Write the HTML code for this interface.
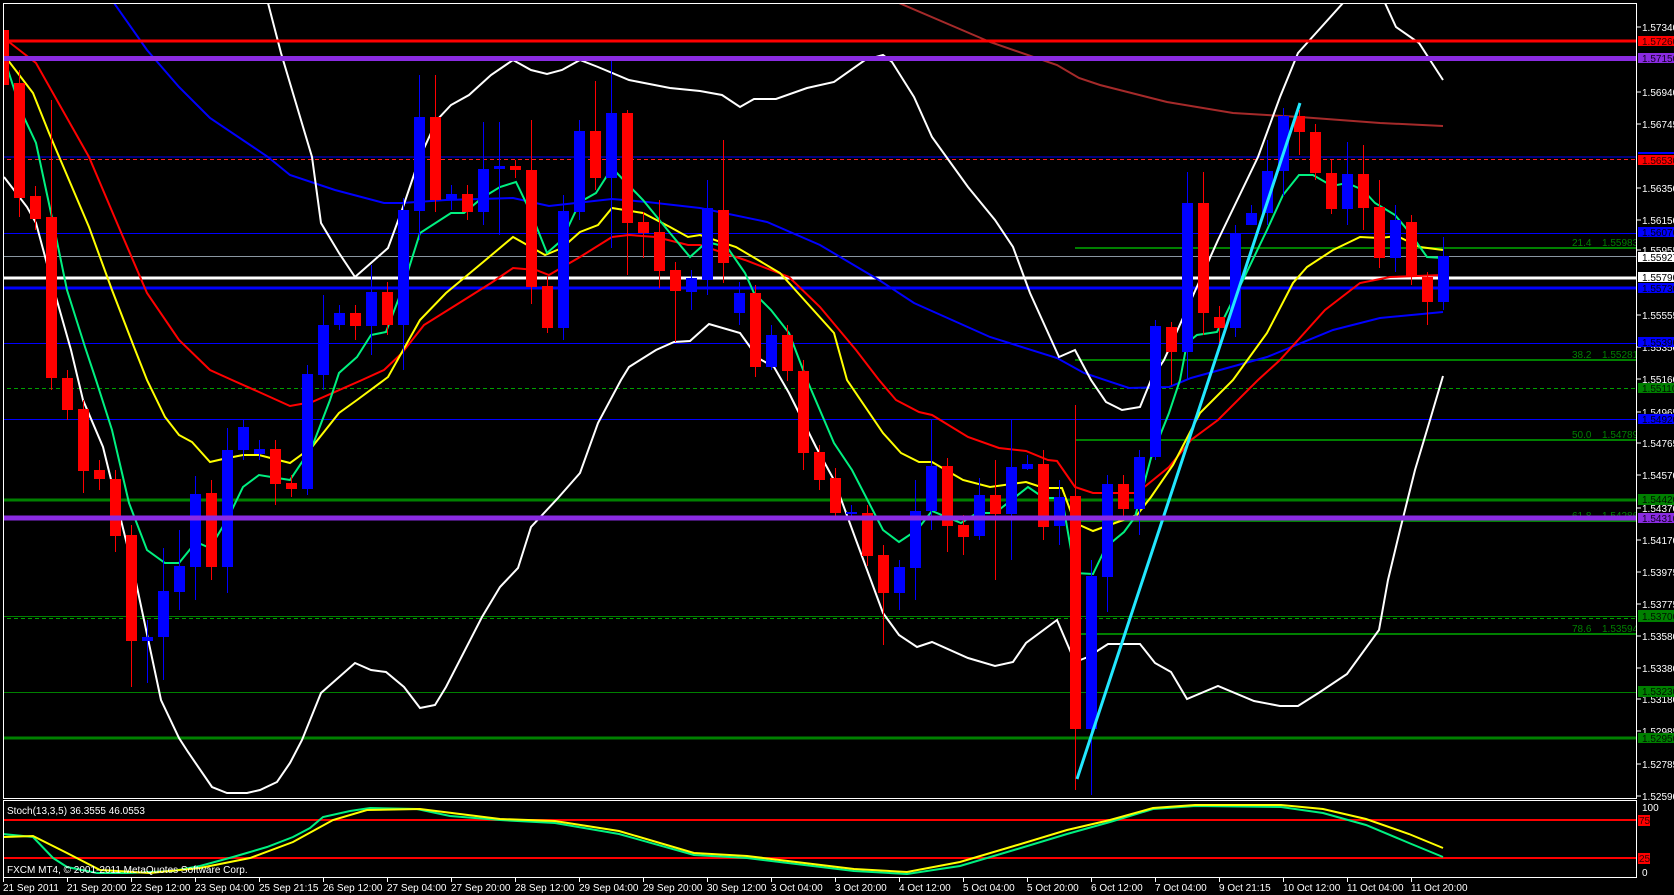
<!DOCTYPE html>
<html><head><meta charset="utf-8"><style>
html,body{margin:0;padding:0;background:#000;width:1674px;height:895px;overflow:hidden}
svg{display:block}
text{font-family:"Liberation Sans",sans-serif;font-size:10px}
</style></head><body>
<svg width="1674" height="895" viewBox="0 0 1674 895" xmlns="http://www.w3.org/2000/svg">
<rect width="1674" height="895" fill="#000"/>
<defs><clipPath id="m"><rect x="4" y="4" width="1633" height="794"/></clipPath>
<clipPath id="s"><rect x="4" y="801" width="1633" height="77"/></clipPath></defs>

<g clip-path="url(#m)">
<!-- horizontal levels -->
<line x1="0" x2="1637" y1="157" y2="157" stroke="#0000ff" stroke-width="1"/>
<line x1="0" x2="1637" y1="159.5" y2="159.5" stroke="#ff2020" stroke-width="1" stroke-dasharray="4,3"/>
<line x1="0" x2="1637" y1="233.5" y2="233.5" stroke="#0000ff" stroke-width="1"/>
<line x1="1075" x2="1637" y1="248" y2="248" stroke="#008000" stroke-width="2"/>
<line x1="0" x2="1637" y1="256.5" y2="256.5" stroke="#8a96a0" stroke-width="1"/>
<line x1="0" x2="1637" y1="343.5" y2="343.5" stroke="#0000ff" stroke-width="1"/>
<line x1="1075" x2="1637" y1="360" y2="360" stroke="#008000" stroke-width="2"/>
<line x1="0" x2="1637" y1="388.5" y2="388.5" stroke="#00a000" stroke-width="1" stroke-dasharray="4,3"/>
<line x1="0" x2="1637" y1="419.5" y2="419.5" stroke="#0000ff" stroke-width="1"/>
<line x1="1075" x2="1637" y1="440" y2="440" stroke="#008000" stroke-width="2"/>
<line x1="1075" x2="1637" y1="521" y2="521" stroke="#008000" stroke-width="2"/>
<line x1="0" x2="1637" y1="616.5" y2="616.5" stroke="#008000" stroke-width="1"/>
<line x1="0" x2="1637" y1="618.5" y2="618.5" stroke="#00a000" stroke-width="1" stroke-dasharray="4,3"/>
<line x1="1075" x2="1637" y1="634" y2="634" stroke="#008000" stroke-width="2"/>
<line x1="0" x2="1637" y1="692.5" y2="692.5" stroke="#008000" stroke-width="1"/>
<line x1="0" x2="1637" y1="738" y2="738" stroke="#008000" stroke-width="3"/>
<line x1="0" x2="1637" y1="500" y2="500" stroke="#008000" stroke-width="3"/>
<line x1="0" x2="1637" y1="278" y2="278" stroke="#ffffff" stroke-width="3"/>
<line x1="0" x2="1637" y1="288" y2="288" stroke="#0000ff" stroke-width="3"/>

<!-- fib texts -->
<g fill="#008000">
<text x="1572" y="246">21.4</text><text x="1602" y="246">1.55983</text>
<text x="1572" y="358">38.2</text><text x="1602" y="358">1.55281</text>
<text x="1572" y="438">50.0</text><text x="1602" y="438">1.54789</text>
<text x="1572" y="519">61.8</text><text x="1602" y="519">1.54286</text>
<text x="1572" y="632">78.6</text><text x="1602" y="632">1.53594</text>
</g>

<!-- brown MA -->
<polyline fill="none" stroke="#a52a2a" stroke-width="2" points="899,3 990,42 1057,65 1079,78 1100,85 1167,102 1233,113 1300,117 1380,123 1443,126"/>
<!-- long blue MA -->
<polyline fill="none" stroke="#0000ff" stroke-width="2" points="114,3 147,50 179,87 210,118 268,157 290,175 335,190 384,203 402,203 446,200 513,198 549,206 612,199 647,202 700,208 767,222 820,245 879,280 914,303 990,337 1057,358 1084,373 1129,388 1169,387 1191,378 1267,357 1333,330 1380,318 1443,312"/>
<!-- bollinger -->
<polyline fill="none" stroke="#fff" stroke-width="2" points="4,177 27,207 36,223 54,290 71,350 83,400 103,447 134,573 161,700 179,738 188,752 212,787 227,793 247,793 260,790 277,782 290,763 302,740 321,693 355,663 371,670 386,672 404,687 420,708 435,705 446,687 482,617 500,587 518,568 531,527 558,498 580,473 598,423 621,380 629,367 656,350 674,342 690,341 709,324 740,333 758,358 774,367 789,393 816,447 834,480 856,540 883,613 899,635 917,647 932,642 968,658 995,666 1013,662 1026,643 1057,620 1075,662 1088,657 1108,644 1140,644 1155,663 1171,672 1187,699 1218,686 1254,701 1280,706 1298,706 1320,692 1347,674 1379,630 1388,580 1400,530 1415,470 1430,420 1443,376"/>
<polyline fill="none" stroke="#fff" stroke-width="2" points="268,3 281,53 295,100 312,157 321,223 339,253 355,277 371,263 388,248 402,210 420,157 437,120 451,105 469,95 491,75 513,60 531,70 547,74 562,70 580,60 598,67 629,80 670,88 700,91 722,95 740,107 754,99 776,99 807,88 834,82 865,60 883,55 892,62 914,97 932,137 968,187 995,220 1013,247 1030,293 1059,357 1075,350 1091,380 1106,402 1122,410 1140,407 1151,380 1164,360 1191,300 1218,240 1258,157 1280,97 1298,53 1316,33 1343,3"/>
<polyline fill="none" stroke="#fff" stroke-width="2" points="1385,3 1396,27 1419,43 1443,80"/>
<!-- red MA -->
<polyline fill="none" stroke="#ff0000" stroke-width="2" points="9,42 36,63 89,157 120,230 147,293 179,340 210,370 232,380 259,392 290,406 312,402 362,380 384,370 402,353 424,325 464,300 491,283 513,268 536,270 549,275 580,257 612,237 629,235 656,237 688,245 700,245 745,260 789,277 820,307 856,350 879,380 896,400 919,412 932,415 968,437 999,448 1026,451 1048,460 1057,461 1075,487 1093,493 1137,493 1169,467 1191,440 1218,420 1258,380 1280,360 1325,310 1360,283 1390,277 1443,275"/>
<!-- yellow MA -->
<polyline fill="none" stroke="#ffff00" stroke-width="2" points="4,55 33,93 49,133 89,227 112,290 134,347 147,380 165,417 179,435 192,442 210,462 223,459 243,455 259,455 290,463 312,447 339,413 357,400 388,377 420,320 446,293 482,263 513,237 545,255 562,248 580,232 598,225 612,208 643,213 670,227 688,237 700,235 736,247 780,273 834,333 847,380 883,433 901,453 919,462 932,462 963,480 990,487 1026,482 1044,488 1062,488 1075,523 1093,531 1115,523 1137,515 1151,497 1173,465 1200,413 1233,380 1267,333 1293,283 1307,267 1333,250 1360,237 1380,238 1397,236 1420,247 1443,250"/>
<!-- green MA -->
<polyline fill="none" stroke="#00f080" stroke-width="2" points="4,58 22,113 36,143 54,227 67,290 85,347 96,380 112,430 129,503 147,550 165,563 179,563 196,542 210,548 228,518 243,487 259,475 290,480 312,447 330,400 339,373 357,357 371,335 386,332 402,290 420,233 451,213 464,213 482,198 500,187 516,182 531,213 547,253 562,240 580,202 596,193 612,168 643,200 670,233 690,257 700,248 707,242 727,247 745,273 754,293 771,310 789,333 807,380 834,443 852,470 883,530 899,542 917,530 932,511 961,523 977,513 995,513 1028,487 1044,498 1062,498 1075,573 1093,574 1106,547 1124,532 1135,517 1151,458 1169,413 1180,380 1187,343 1197,335 1217,332 1223,320 1243,280 1267,230 1283,195 1299,175 1313,175 1332,186 1347,183 1363,190 1375,203 1395,215 1410,233 1427,257 1443,258"/>

<!-- wicks -->
<path fill="none" stroke="#ff0000" stroke-width="1" d="M3.5 22V105M19.5 70V217M35.5 186V230M51.5 100V390M67.5 370V420M83.5 400V493M99.5 460V490M115.5 470V552M131.5 525V687M211.5 480V580M275.5 440V505M291.5 475V497M355.5 305V340M387.5 282V335M435.5 75V212M467.5 185V220M515.5 160V178M531.5 120V304M547.5 276V333M595.5 81V190M627.5 110V275M643.5 212V258M659.5 200V288M675.5 262V342M723.5 140V283M755.5 285V377M787.5 325V381M803.5 360V470M819.5 445V490M835.5 468V520M867.5 505V566M883.5 545V645M947.5 458V552M963.5 515V555M995.5 460V580M1043.5 450V540M1075.5 405V790M1123.5 475V520M1171.5 322V385M1203.5 172V335M1219.5 306V345M1299.5 110V155M1315.5 124V180M1331.5 160V214M1363.5 145V230M1379.5 180V268M1411.5 215V285M1427.5 272V325"/>
<path fill="none" stroke="#0000ff" stroke-width="1" d="M147.5 620V683M163.5 548V680M179.5 530V610M195.5 476V600M227.5 428V593M243.5 420V460M259.5 440V460M307.5 365V495M323.5 295V390M339.5 305V330M371.5 265V355M403.5 198V370M419.5 75V240M451.5 185V210M483.5 122V225M499.5 122V235M563.5 195V340M579.5 120V220M611.5 60V248M691.5 270V310M707.5 180V295M739.5 282V325M771.5 325V370M851.5 505V520M899.5 560V610M915.5 480V600M931.5 420V530M979.5 478V540M1011.5 420V560M1027.5 455V470M1059.5 480V545M1091.5 560V795M1107.5 475V612M1139.5 450V535M1155.5 320V460M1187.5 172V380M1235.5 225V337M1251.5 205V225M1267.5 140V225M1283.5 108V196M1347.5 142V225M1395.5 205V272M1443.5 237V310"/>
<!-- red bodies -->
<path fill="#ff0000" d="M-2 30h11v55h-11zM14 83h11v115h-11zM30 196h11v23h-11zM46 217h11v161h-11zM62 378h11v32h-11zM78 409h11v62h-11zM94 470h11v9h-11zM110 479h11v57h-11zM126 535h11v106h-11zM206 493h11v74h-11zM270 449h11v35h-11zM286 483h11v6h-11zM350 313h11v13h-11zM382 292h11v33h-11zM430 117h11v83h-11zM462 194h11v18h-11zM510 166h11v4h-11zM526 170h11v117h-11zM542 286h11v42h-11zM590 131h11v47h-11zM622 113h11v110h-11zM638 222h11v11h-11zM654 232h11v39h-11zM670 270h11v21h-11zM718 210h11v53h-11zM750 293h11v74h-11zM782 335h11v36h-11zM798 371h11v82h-11zM814 452h11v28h-11zM830 478h11v35h-11zM862 513h11v43h-11zM878 555h11v38h-11zM942 466h11v60h-11zM958 525h11v12h-11zM990 495h11v19h-11zM1038 464h11v63h-11zM1070 496h11v233h-11zM1118 484h11v25h-11zM1166 327h11v25h-11zM1198 203h11v110h-11zM1214 317h11v11h-11zM1294 116h11v16h-11zM1310 132h11v41h-11zM1326 173h11v36h-11zM1358 174h11v34h-11zM1374 207h11v51h-11zM1406 222h11v55h-11zM1422 277h11v25h-11z"/>
<!-- blue bodies -->
<path fill="#0000ff" d="M142 637h11v4h-11zM158 591h11v46h-11zM174 566h11v26h-11zM190 494h11v73h-11zM222 450h11v117h-11zM238 427h11v23h-11zM254 449h11v5h-11zM302 374h11v115h-11zM318 325h11v50h-11zM334 313h11v12h-11zM366 292h11v34h-11zM398 210h11v115h-11zM414 117h11v94h-11zM446 194h11v6h-11zM478 169h11v43h-11zM494 166h11v3h-11zM558 211h11v117h-11zM574 131h11v81h-11zM606 113h11v65h-11zM686 278h11v14h-11zM702 208h11v72h-11zM734 293h11v20h-11zM766 335h11v32h-11zM846 512h11v2h-11zM894 567h11v26h-11zM910 511h11v57h-11zM926 466h11v45h-11zM974 495h11v41h-11zM1006 467h11v47h-11zM1022 464h11v5h-11zM1054 497h11v29h-11zM1086 576h11v153h-11zM1102 484h11v93h-11zM1134 457h11v52h-11zM1150 326h11v131h-11zM1182 203h11v149h-11zM1230 233h11v95h-11zM1246 213h11v12h-11zM1262 171h11v42h-11zM1278 116h11v55h-11zM1342 174h11v35h-11zM1390 220h11v38h-11zM1438 256h11v46h-11z"/>
<!-- cyan trend -->
<line x1="1077" y1="779" x2="1300" y2="103" stroke="#22e8ff" stroke-width="3"/>
<!-- top levels -->
<line x1="0" x2="1637" y1="41" y2="41" stroke="#ff0000" stroke-width="3"/>
<line x1="0" x2="1637" y1="58.5" y2="58.5" stroke="#8a2be2" stroke-width="5"/>
<line x1="0" x2="1637" y1="518" y2="518" stroke="#8a2be2" stroke-width="5"/>
</g>

<!-- stochastic pane -->
<g clip-path="url(#s)">
<line x1="0" x2="1637" y1="820" y2="820" stroke="#ff0000" stroke-width="2"/>
<line x1="0" x2="1637" y1="858" y2="858" stroke="#ff0000" stroke-width="2"/>
<polyline fill="none" stroke="#00f080" stroke-width="2" points="3,834 33,837 53,858 67,867 97,873 127,873 173,871 200,866 233,857 267,847 293,837 310,828 323,817 350,811 370,808 417,809 450,816 500,820 555,823 619,834 694,855 747,858 854,871 907,874 960,866 1014,850 1067,834 1110,822 1153,809 1195,806 1281,807 1323,813 1366,825 1409,843 1443,857"/>
<polyline fill="none" stroke="#ffff00" stroke-width="2" points="3,837 33,836 67,853 100,870 150,873 200,868 250,858 293,842 333,820 367,810 420,809 500,819 555,821 619,831 694,853 747,856 854,869 907,872 960,862 1014,846 1067,830 1110,820 1153,808 1195,805 1281,805 1323,809 1366,819 1409,834 1443,848"/>
</g>
<text x="7" y="814" fill="#fff">Stoch(13,3,5) 36.3555 46.0553</text>
<text x="7" y="873" fill="#fff">FXCM MT4, © 2001-2011 MetaQuotes Software Corp.</text>

<!-- frames -->
<rect x="3.5" y="3.5" width="1633" height="795" fill="none" stroke="#fff" stroke-width="1"/>
<rect x="3.5" y="800.5" width="1633" height="77" fill="none" stroke="#fff" stroke-width="1"/>

<!-- right axis labels -->
<g fill="#fff">
<text x="1642" y="31">1.57340</text><text x="1642" y="96">1.56940</text><text x="1642" y="128">1.56745</text>
<text x="1642" y="192">1.56350</text><text x="1642" y="224">1.56150</text><text x="1642" y="254">1.55955</text>
<text x="1642" y="319">1.55555</text><text x="1642" y="351">1.55350</text><text x="1642" y="383">1.55160</text>
<text x="1642" y="416">1.54965</text><text x="1642" y="447">1.54765</text><text x="1642" y="479">1.54570</text>
<text x="1642" y="512">1.54370</text><text x="1642" y="544">1.54170</text><text x="1642" y="576">1.53975</text>
<text x="1642" y="608">1.53775</text><text x="1642" y="640">1.53580</text><text x="1642" y="672">1.53380</text>
<text x="1642" y="703">1.53180</text><text x="1642" y="735">1.52985</text><text x="1642" y="768">1.52785</text>
<text x="1642" y="800">1.52590</text>
<text x="1642" y="811">100</text><text x="1642" y="876">0</text>
</g>
<g stroke="#fff" stroke-width="1">
<path d="M1637 27h4M1637 92h4M1637 124h4M1637 188h4M1637 220h4M1637 250h4M1637 315h4M1637 347h4M1637 379h4M1637 412h4M1637 443h4M1637 475h4M1637 508h4M1637 540h4M1637 572h4M1637 604h4M1637 636h4M1637 668h4M1637 699h4M1637 731h4M1637 764h4M1637 796h4"/>
</g>
<!-- colored tags -->
<rect x="1638" y="36" width="36" height="10" fill="#ff0000"/><text x="1642" y="45" fill="#300">1.57260</text>
<rect x="1638" y="53" width="36" height="10" fill="#8a2be2"/><text x="1642" y="62" fill="#102">1.57150</text>
<rect x="1638" y="152" width="36" height="2" fill="#0000ff"/>
<rect x="1638" y="155" width="36" height="10" fill="#ff0000"/><text x="1642" y="164" fill="#300">1.56530</text>
<rect x="1638" y="227" width="36" height="10" fill="#0000ff"/><text x="1642" y="236" fill="#001">1.56070</text>
<rect x="1638" y="252" width="36" height="10" fill="#ffffff"/><text x="1642" y="261" fill="#000">1.55927</text>
<rect x="1638" y="272" width="36" height="10" fill="#ffffff"/><text x="1642" y="281" fill="#000">1.55790</text>
<rect x="1638" y="283" width="36" height="10" fill="#0000ff"/><text x="1642" y="292" fill="#001">1.55730</text>
<rect x="1638" y="337" width="36" height="10" fill="#0000ff"/><text x="1642" y="346" fill="#001">1.55390</text>
<rect x="1638" y="383" width="36" height="10" fill="#008000"/><text x="1642" y="392" fill="#010">1.55110</text>
<rect x="1638" y="414" width="36" height="10" fill="#0000ff"/><text x="1642" y="423" fill="#001">1.54920</text>
<rect x="1638" y="494" width="36" height="11" fill="#008000"/><text x="1642" y="503" fill="#010">1.54420</text>
<rect x="1638" y="513" width="36" height="10" fill="#8a2be2"/><text x="1642" y="522" fill="#102">1.54310</text>
<rect x="1638" y="610" width="36" height="12" fill="#008000"/><text x="1642" y="620" fill="#010">1.53700</text>
<rect x="1638" y="686" width="36" height="11" fill="#008000"/><text x="1642" y="695" fill="#010">1.53230</text>
<rect x="1638" y="733" width="36" height="10" fill="#008000"/><text x="1642" y="742" fill="#010">1.52950</text>
<rect x="1638" y="815" width="12" height="11" fill="#ff0000"/><text x="1639" y="824" fill="#300">75</text>
<rect x="1638" y="853" width="12" height="11" fill="#ff0000"/><text x="1639" y="862" fill="#300">25</text>

<!-- time axis -->
<g stroke="#fff"><path d="M3.5 878v4M67.5 878v4M131.5 878v4M195.5 878v4M259.5 878v4M323.5 878v4M387.5 878v4M451.5 878v4M515.5 878v4M579.5 878v4M643.5 878v4M707.5 878v4M771.5 878v4M835.5 878v4M899.5 878v4M963.5 878v4M1027.5 878v4M1091.5 878v4M1155.5 878v4M1219.5 878v4M1283.5 878v4M1347.5 878v4M1411.5 878v4"/></g>
<g fill="#fff">
<text x="3" y="891">21 Sep 2011</text><text x="67" y="891">21 Sep 20:00</text><text x="131" y="891">22 Sep 12:00</text>
<text x="195" y="891">23 Sep 04:00</text><text x="259" y="891">25 Sep 21:15</text><text x="323" y="891">26 Sep 12:00</text>
<text x="387" y="891">27 Sep 04:00</text><text x="451" y="891">27 Sep 20:00</text><text x="515" y="891">28 Sep 12:00</text>
<text x="579" y="891">29 Sep 04:00</text><text x="643" y="891">29 Sep 20:00</text><text x="707" y="891">30 Sep 12:00</text>
<text x="771" y="891">3 Oct 04:00</text><text x="835" y="891">3 Oct 20:00</text><text x="899" y="891">4 Oct 12:00</text>
<text x="963" y="891">5 Oct 04:00</text><text x="1027" y="891">5 Oct 20:00</text><text x="1091" y="891">6 Oct 12:00</text>
<text x="1155" y="891">7 Oct 04:00</text><text x="1219" y="891">9 Oct 21:15</text><text x="1283" y="891">10 Oct 12:00</text>
<text x="1347" y="891">11 Oct 04:00</text><text x="1411" y="891">11 Oct 20:00</text>
</g>
</svg>
</body></html>
